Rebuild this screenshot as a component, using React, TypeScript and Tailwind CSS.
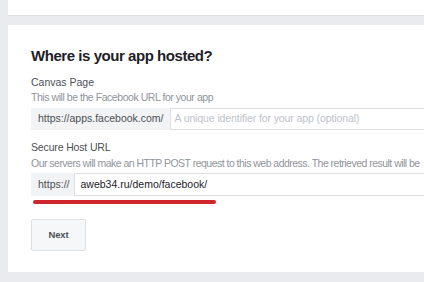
import React from "react";

export default function App() {
  return (
    <div
      className="w-[424px] h-[282px] overflow-hidden bg-[#e9ebee] pl-[8px]"
      style={{ fontFamily: '"Liberation Sans", Arial, sans-serif' }}
    >
      <div className="h-[16px] w-[430px] bg-white border-b border-[#dddfe2]" />
      <div className="mt-[9px] h-[247px] w-[430px] bg-white pl-[23px] pt-[21px]">
        <h2 className="text-[15px] leading-[20px] font-bold tracking-[-0.45px] text-[#1d2129] whitespace-nowrap">
          Where is your app hosted?
        </h2>
        <div className="mt-[9px] text-[10.5px] leading-[14px] text-[#4b4f56]">Canvas Page</div>
        <div className="mt-[1px] text-[10.5px] leading-[14px] tracking-[-0.45px] text-[#90949c] whitespace-nowrap">
          This will be the Facebook URL for your app
        </div>
        <div className="mt-[4px] flex h-[22px] text-[10.5px]">
          <div className="flex items-center bg-[#f2f3f5] pl-[7px] pr-[6px] text-[#4b4f56] whitespace-nowrap">
            https://apps.facebook.com/
          </div>
          <div className="flex flex-1 items-center border border-[#dddfe2] pl-[4px] tracking-[-0.1px] text-[#bec2c9] whitespace-nowrap">
            A unique identifier for your app (optional)
          </div>
        </div>
        <div className="mt-[10px] text-[10.5px] leading-[14px] tracking-[-0.15px] text-[#4b4f56]">Secure Host URL</div>
        <div className="mt-[2px] text-[10.5px] leading-[14px] tracking-[-0.52px] text-[#90949c] whitespace-nowrap">
          Our servers will make an HTTP POST request to this web address. The retrieved result will be
        </div>
        <div className="mt-[3px] flex h-[23px] text-[10.5px]">
          <div className="flex items-center bg-[#f2f3f5] pl-[7px] pr-[4px] text-[#4b4f56] whitespace-nowrap">https://</div>
          <div className="flex flex-1 items-center border border-[#dddfe2] pl-[6px] text-[#1d2129] whitespace-nowrap">
            aweb34.ru/demo/facebook/
          </div>
        </div>
        <div className="mt-[4px] ml-[2px] h-[4px] w-[183px] rounded-full bg-[#d0262d]" />
        <button className="mt-[15px] h-[32px] w-[55px] rounded-[2px] border border-[#dddfe2] bg-[#f6f7f9] text-[9.5px] font-bold tracking-[-0.2px] text-[#4b4f56]">
          Next
        </button>
      </div>
    </div>
  );
}
